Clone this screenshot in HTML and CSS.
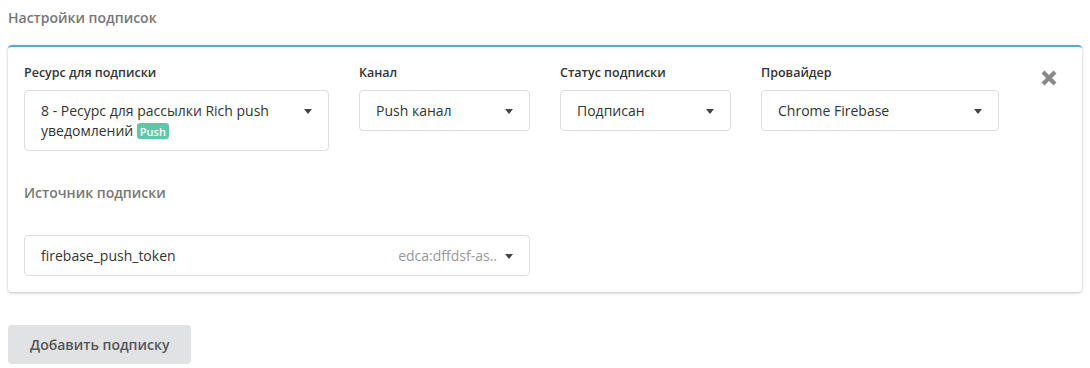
FILE: index.html
```html
<!DOCTYPE html>
<html lang="ru">
<head>
    <meta charset="UTF-8">
    <title>Настройки подписок</title>
    <link rel="stylesheet" href="styles.css">
</head>
<body>

<div class="page">
    <h3 class="section-title">Настройки подписок</h3>

    <div class="sub-card">
        <button class="remove-btn" title="Удалить">
            <svg width="18" height="18" viewBox="0 0 18 18"><path d="M3 3 L15 15 M15 3 L3 15" stroke="#888" stroke-width="4.2" stroke-linecap="butt"/></svg>
        </button>

        <div class="fields-row">
            <div class="field field-resource">
                <label>Ресурс для подписки</label>
                <div class="select">
                    <span class="select-value">8 - Ресурс для рассылки Rich push уведомлений <span class="badge">Push</span></span>
                    <span class="caret"></span>
                </div>
            </div>
            <div class="field field-channel">
                <label>Канал</label>
                <div class="select">
                    <span class="select-value">Push канал</span>
                    <span class="caret"></span>
                </div>
            </div>
            <div class="field field-status">
                <label>Статус подписки</label>
                <div class="select">
                    <span class="select-value">Подписан</span>
                    <span class="caret"></span>
                </div>
            </div>
            <div class="field field-provider">
                <label>Провайдер</label>
                <div class="select">
                    <span class="select-value">Chrome Firebase</span>
                    <span class="caret"></span>
                </div>
            </div>
        </div>

        <div class="source-block">
            <h4 class="sub-title">Источник подписки</h4>
            <div class="select select-source">
                <span class="select-value">firebase_push_token</span>
                <span class="select-hint">edca:dffdsf-as..</span>
                <span class="caret"></span>
            </div>
        </div>
    </div>

    <button class="add-btn">Добавить подписку</button>
</div>

</body>
</html>
```

FILE: styles.css
```css
body {
    margin: 0;
    font-family: 'Open Sans', 'Noto Sans', sans-serif;
    color: #333;
    background-color: #fff;
}
.page {
    padding: 8px 8px 0 8px;
}
.section-title {
    margin: 0 0 17px 0;
    font-size: 14px;
    font-weight: 600;
    color: #777;
    line-height: 20px;
}
.sub-card {
    position: relative;
    border-top: 2px solid #5ea6d2;
    border-radius: 4px;
    box-shadow: 0 1px 3px rgba(0, 0, 0, 0.25);
    padding: 17px 16px 16px 16px;
}
.remove-btn {
    position: absolute;
    top: 22px;
    right: 24px;
    border: none;
    background: none;
    padding: 0;
    cursor: pointer;
}
.fields-row {
    display: flex;
    gap: 30px;
}
.field label {
    display: block;
    font-size: 12.5px;
    font-weight: 600;
    color: #333;
    line-height: 18px;
    margin-bottom: 8px;
}
.field-resource { width: 305px; }
.field-channel { width: 171px; }
.field-status { width: 171px; }
.field-provider { width: 238px; }
.select {
    display: flex;
    align-items: flex-start;
    border: 1px solid #ddd;
    border-radius: 4px;
    padding: 10px 16px 9px 16px;
    font-size: 14px;
    line-height: 20px;
    color: #333;
    min-height: 20px;
}
.select-value {
    flex: 1;
}
.caret {
    width: 0;
    height: 0;
    border-left: 4.5px solid transparent;
    border-right: 4.5px solid transparent;
    border-top: 5px solid #444;
    margin-top: 8px;
    margin-left: 8px;
}
.badge {
    display: inline-block;
    background-color: #5fc7a8;
    color: #fff;
    font-size: 11px;
    font-weight: 600;
    line-height: 13px;
    padding: 2px 3px 1px 3px;
    border-radius: 3px;
    vertical-align: 0;
}
.source-block {
    margin-top: 32px;
}
.sub-title {
    margin: 0 0 32px 0;
    font-size: 14px;
    font-weight: 600;
    color: #777;
    line-height: 20px;
}
.select-source {
    width: 472px;
}
.select-hint {
    color: #999;
}
.add-btn {
    margin-top: 33px;
    border: none;
    border-radius: 4px;
    background-color: #e1e2e4;
    color: #555;
    font-family: inherit;
    font-size: 14px;
    font-weight: 600;
    padding: 10px 22px;
    line-height: 19px;
    cursor: pointer;
}
```
